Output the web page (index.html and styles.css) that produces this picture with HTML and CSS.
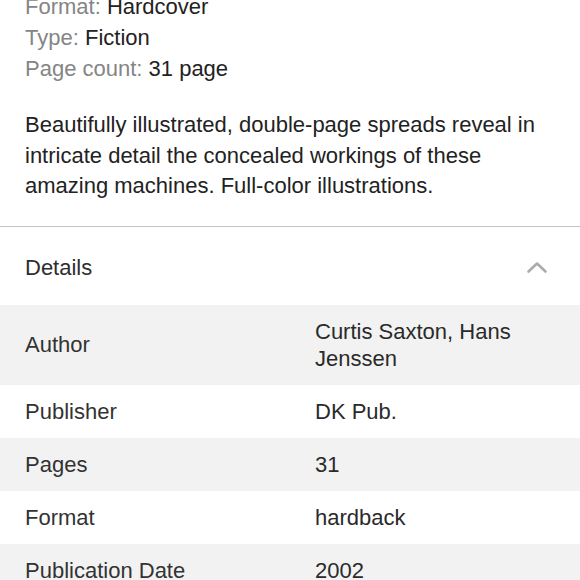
FILE: index.html
```html
<!DOCTYPE html>
<html>
<head>
<meta charset="utf-8">
<link rel="stylesheet" href="styles.css">
</head>
<body>
<div class="page">
  <section class="summary">
    <div class="facts">
      <div class="fact"><span class="fact-label">Format:</span> <span class="fact-value">Hardcover</span></div>
      <div class="fact"><span class="fact-label">Type:</span> <span class="fact-value">Fiction</span></div>
      <div class="fact"><span class="fact-label">Page count:</span> <span class="fact-value">31 page</span></div>
    </div>
    <p class="description">Beautifully illustrated, double-page spreads reveal in intricate detail the concealed workings of these amazing machines. Full-color illustrations.</p>
  </section>
  <section class="details">
    <div class="details-header">
      <span class="details-title">Details</span>
      <svg class="chevron" width="22" height="14" viewBox="0 0 22 14">
        <polyline points="2.5,11.5 11,3.5 19.5,11.5" fill="none" stroke="#ababab" stroke-width="2.6" stroke-linecap="round" stroke-linejoin="round"/>
      </svg>
    </div>
    <div class="details-table">
      <div class="row shaded"><div class="cell-label">Author</div><div class="cell-value">Curtis Saxton, Hans Jenssen</div></div>
      <div class="row"><div class="cell-label">Publisher</div><div class="cell-value">DK Pub.</div></div>
      <div class="row shaded"><div class="cell-label">Pages</div><div class="cell-value">31</div></div>
      <div class="row"><div class="cell-label">Format</div><div class="cell-value">hardback</div></div>
      <div class="row shaded"><div class="cell-label">Publication Date</div><div class="cell-value">2002</div></div>
    </div>
  </section>
</div>
</body>
</html>
```

FILE: styles.css
```css
html, body {
  margin: 0;
  padding: 0;
  background: #ffffff;
}
body {
  font-family: "Liberation Sans", Arial, Helvetica, sans-serif;
  font-size: 22px;
  color: #222222;
  width: 580px;
  overflow: hidden;
}
.page {
  display: flex;
  flex-direction: column;
}
.summary {
  padding: 0 25px 24px 25px;
  border-bottom: 1px solid #c4c4c4;
}
.facts {
  margin-top: -9px;
  line-height: 31px;
}
.fact-label {
  color: #858585;
}
.fact-value {
  color: #222222;
}
.description {
  margin: 26px 0 0 0;
  line-height: 30.5px;
  color: #222222;
}
.details-header {
  height: 78px;
  box-sizing: border-box;
  padding: 3px 32px 0 25px;
  display: flex;
  align-items: center;
  justify-content: space-between;
}
.details-title {
  line-height: 27px;
  color: #2e2e2e;
}
.chevron {
  display: block;
  margin-top: 0;
}
.details-table {
  display: flex;
  flex-direction: column;
}
.row {
  display: grid;
  grid-template-columns: 290px 1fr;
  align-items: center;
  padding: 13px 25px;
  line-height: 27px;
  color: #333333;
  background: #ffffff;
}
.row.shaded {
  background: #f2f2f2;
}
.cell-value {
  color: #2a2a2a;
}
```
